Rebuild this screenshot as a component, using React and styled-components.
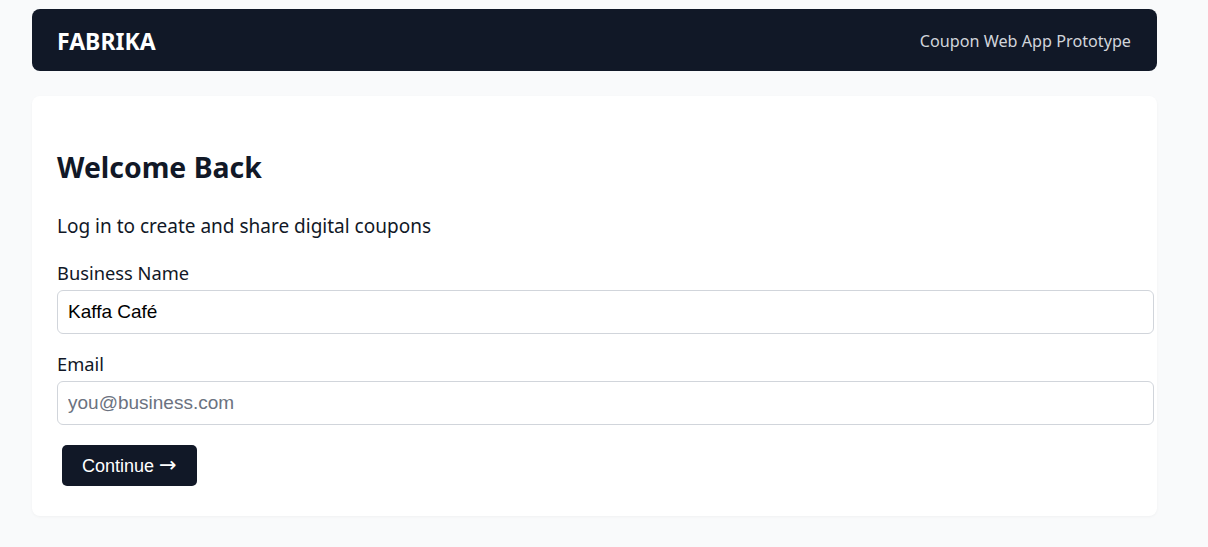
import styled, { createGlobalStyle } from "styled-components";

const GlobalStyle = createGlobalStyle`
  body {
    margin: 0;
    background: #f9fafb;
    font-family: "Noto Sans", "Open Sans", sans-serif;
    color: #111827;
  }
`;

const Page = styled.div`
  width: 1125px;
  padding: 9px 0 30px 32px;
  display: flex;
  flex-direction: column;
  gap: 25px;
`;

const Header = styled.header`
  height: 62px;
  padding: 0 26px 0 25px;
  background: #111827;
  border-radius: 8px;
  display: flex;
  align-items: center;
  justify-content: space-between;
`;

const Logo = styled.div`
  color: #ffffff;
  font-size: 23px;
  font-weight: 700;
  line-height: 30px;
  padding-top: 2px;
`;

const Tagline = styled.div`
  color: #d1d5db;
  font-size: 16.2px;
  padding-top: 2px;
`;

const Card = styled.main`
  background: #ffffff;
  border-radius: 8px;
  padding: 25px;
  box-shadow: 0 1px 3px rgba(0, 0, 0, 0.04);
`;

const Title = styled.h2`
  font-size: 28.4px;
  line-height: 38px;
  font-weight: 700;
  margin: 27px 0 0;
  color: #111827;
`;

const Subtitle = styled.p`
  font-size: 19px;
  line-height: 24px;
  margin: 28px 0 0;
  color: #111827;
`;

const Label = styled.label`
  display: block;
  font-size: 18.3px;
  line-height: 24px;
  margin: ${(p) => p.$top}px 0 5px;
  color: #111827;
`;

const Input = styled.input`
  display: block;
  width: 100%;
  height: 22px;
  padding: 10px;
  border: 1px solid #d1d5db;
  border-radius: 6px;
  font-family: "Liberation Sans", Arial, sans-serif;
  font-size: 19px;
  color: #000000;
  background: #ffffff;
  outline: none;
  &::placeholder {
    color: #6b7280;
  }
`;

const Button = styled.button`
  margin: 20px 5px 5px;
  height: 41px;
  padding: 0 20px;
  background: #111827;
  color: #ffffff;
  border: none;
  border-radius: 5px;
  font-family: "Liberation Sans", Arial, sans-serif;
  font-size: 18px;
  line-height: 20px;
  cursor: pointer;
`;

const Arrow = styled.span`
  font-family: "DejaVu Sans", sans-serif;
  font-size: 21px;
  line-height: 1;
`;

export default function App() {
  return (
    <>
      <GlobalStyle />
      <Page>
        <Header>
          <Logo>FABRIKA</Logo>
          <Tagline>Coupon Web App Prototype</Tagline>
        </Header>
        <Card>
          <Title>Welcome Back</Title>
          <Subtitle>Log in to create and share digital coupons</Subtitle>
          <Label $top={23}>Business Name</Label>
          <Input defaultValue="Kaffa Café" />
          <Label $top={18}>Email</Label>
          <Input placeholder="you@business.com" />
          <Button>
            Continue <Arrow>→</Arrow>
          </Button>
        </Card>
      </Page>
    </>
  );
}
